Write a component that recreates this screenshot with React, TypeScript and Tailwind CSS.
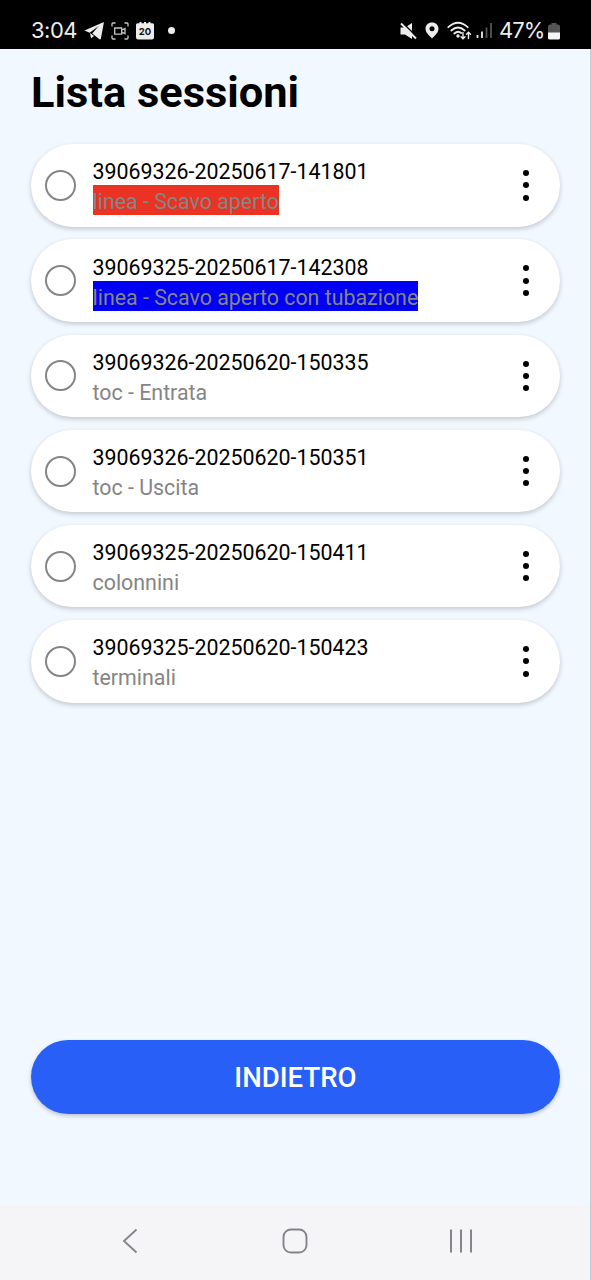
type Session = {
  id: string;
  label: string;
  labelClassName?: string;
};

const sessions: Session[] = [
  { id: '39069326-20250617-141801', label: 'linea - Scavo aperto', labelClassName: 'bg-[#ea3323]' },
  {
    id: '39069325-20250617-142308',
    label: 'linea - Scavo aperto con tubazione',
    labelClassName: 'bg-[#0000f5]'
  },
  { id: '39069326-20250620-150335', label: 'toc - Entrata' },
  { id: '39069326-20250620-150351', label: 'toc - Uscita' },
  { id: '39069325-20250620-150411', label: 'colonnini' },
  { id: '39069325-20250620-150423', label: 'terminali' }
];

function StatusBar() {
  return (
    <header className="flex h-[49px] shrink-0 items-center justify-between bg-black pt-[13px] pr-[31px] pb-[1px] pl-[31px] font-['Inter',sans-serif] text-[#ededed]">
      <div className="flex items-center">
        <span className="w-[53px] text-[22px] leading-[35px] tracking-[-0.5px]">3:04</span>
        {/* Telegram */}
        <svg width="20" height="18" viewBox="0 0 20 18" fill="currentColor">
          <path d="M19.3 0.2 0.5 8.6 5.7 10.7 14.7 4 8.2 11.4 15.5 17.2Q16.5 17.8 16.9 16.5L19.8 1Q20 0 19.3 0.2Z" />
          <path d="m5.9 10.9 1.2 5.3 3-2.3Z" />
        </svg>
        {/* Screen recorder */}
        <svg
          className="ml-[7px]"
          width="18"
          height="18"
          viewBox="0 0 18 18"
          fill="none"
          stroke="#c4c4c4"
          strokeWidth="1.3"
        >
          <path d="M1 4.5V2q0-1 1-1h2.5M13.5 1H16q1 0 1 1v2.5M17 13.5V16q0 1-1 1h-2.5M4.5 17H2q-1 0-1-1v-2.5" />
          <path d="M3.7 6h7v6.2h-7ZM10.7 8.2l3.3-1.7v5.2l-3.3-1.7" />
        </svg>
        {/* Calendar */}
        <svg className="ml-[7px]" width="18" height="18" viewBox="0 0 18 18">
          <path
            d="M1.5 1.2h2V0h2v1.2h2.5V0h2v1.2h2.5V0h2v1.2h2Q18 1.2 18 2.7V15.5Q18 17.5 16 17.5H2Q0 17.5 0 15.5V2.7Q0 1.2 1.5 1.2Z"
            fill="currentColor"
          />
          <text x="9" y="13" textAnchor="middle" fontSize="9.5" fontWeight="700" fill="#111">
            20
          </text>
        </svg>
        <span className="ml-[14px] size-[7px] rounded-full bg-[#ededed]" />
      </div>

      <div className="flex items-center">
        {/* Muted */}
        <svg width="17" height="18" viewBox="0 0 17 18">
          <path d="M0.5 5.5H5L12 1v16L5 12.5H0.5Z" fill="currentColor" />
          <path d="M1.8 0 17.5 15.5" stroke="#000" strokeWidth="1.6" />
          <path d="M1 1.5 16 16.5" stroke="currentColor" strokeWidth="2" />
        </svg>
        {/* Location */}
        <svg className="ml-[8px]" width="14" height="17" viewBox="0 0 14 17">
          <path
            d="M7 0.5C3.2 0.5 0.5 3.2 0.5 6.8 0.5 10.5 4 13.5 7 16.5 10 13.5 13.5 10.5 13.5 6.8 13.5 3.2 10.8 0.5 7 0.5ZM7 4.2A2.5 2.5 0 1 1 7 9.2 2.5 2.5 0 0 1 7 4.2Z"
            fill="currentColor"
            fillRule="evenodd"
          />
        </svg>
        {/* Wi-Fi */}
        <svg
          className="ml-[8px]"
          width="25"
          height="19"
          viewBox="0 0 25 19"
          fill="none"
          stroke="currentColor"
          strokeWidth="1.8"
          strokeLinecap="round"
        >
          <path d="M1.3 6.2Q11 -2.8 20.7 6.2M4.3 9.5Q11 3.5 17.7 9.5M7.3 12.5Q11 9.2 14.2 12" />
          <circle cx="11" cy="15" r="0.8" fill="currentColor" />
          <path d="M16 11.5v6M14 15.7l2 2 2-2M21.5 17.5v-6M19.5 13.3l2-2 2 2" strokeWidth="1.4" />
        </svg>
        {/* Signal */}
        <svg className="ml-[4px]" width="16" height="17" viewBox="0 0 16 17" strokeWidth="1.8">
          <path d="M1.5 16v-3M6 16V9.5" stroke="#ededed" />
          <path d="M10.5 16V5.5M15 16V1" stroke="#555" />
        </svg>
        <span className="ml-[7px] w-[49px] text-[22px] leading-[35px] tracking-[-0.9px]">47%</span>
        {/* Battery */}
        <svg className="mt-[1px]" width="12" height="17" viewBox="0 0 12 17">
          <path d="M3.5 0h5v1.5H10q2 0 2 2V10H0V3.5q0-2 2-2h1.5Z" fill="#555" />
          <path d="M0 9.5h12V15q0 1.5-1.5 1.5h-9Q0 16.5 0 15Z" fill="#f5f5f5" />
        </svg>
      </div>
    </header>
  );
}

function SessionCard({ session }: { session: Session }) {
  return (
    <li className="flex h-[82.3px] items-center rounded-full bg-white pr-[30px] pl-[14px] shadow-[0_2px_5px_rgba(0,0,0,0.2)]">
      <span className="size-[31px] shrink-0 rounded-full border-[2.5px] border-[#858585]" />
      <div className="ml-[16.5px] flex flex-1 flex-col items-start text-[21.38px] leading-[27px]">
        <span className="pt-[3px] text-black">{session.id}</span>
        <span className={`pt-[3px] text-[#858585] ${session.labelClassName ?? ''}`}>{session.label}</span>
      </div>
      <div className="flex w-[8px] flex-col items-center gap-[6.2px]">
        <span className="size-[6px] rounded-full bg-black" />
        <span className="size-[6px] rounded-full bg-black" />
        <span className="size-[6px] rounded-full bg-black" />
      </div>
    </li>
  );
}

function NavigationBar() {
  return (
    <nav className="flex h-[75px] shrink-0 items-center justify-between bg-[#f5f5f8] pr-[117px] pb-[4px] pl-[122px] text-[#858589]">
      <svg width="16" height="26" viewBox="0 0 16 26" fill="none" stroke="currentColor" strokeWidth="1.9">
        <path d="M14.5 1.5 2 13l12.5 11.5" />
      </svg>
      <svg
        className="ml-[3px]"
        width="26"
        height="26"
        viewBox="0 0 26 26"
        fill="none"
        stroke="currentColor"
        strokeWidth="1.9"
      >
        <rect x="1.5" y="1.5" width="23" height="23" rx="7.5" />
      </svg>
      <svg width="24" height="26" viewBox="0 0 24 26" stroke="currentColor" strokeWidth="2">
        <path d="M2 1.5v23M12 1.5v23M22 1.5v23" />
      </svg>
    </nav>
  );
}

export default function App() {
  return (
    <div className="flex h-[1280px] w-[591px] flex-col overflow-hidden bg-[#f1f8ff] font-['Roboto',sans-serif]">
      <StatusBar />
      <div className="flex flex-1 flex-col border-r border-[#c5ccd3]">
        <main className="flex flex-1 flex-col pr-[30px] pl-[31px]">
          <h1 className="mt-[18px] text-[43.4px] leading-[52px] font-bold text-black">Lista sessioni</h1>
          <ul className="mt-[25.3px] flex flex-col gap-[12.9px]">
            {sessions.map((session) => (
              <SessionCard key={session.id} session={session} />
            ))}
          </ul>
          <button className="mt-auto mb-[91.5px] h-[73.5px] shrink-0 rounded-full bg-[#2860f7] pt-[1.5px] text-[27.6px] font-medium text-white shadow-[0_2px_4px_rgba(0,0,0,0.22)]">
            INDIETRO
          </button>
        </main>
        <NavigationBar />
      </div>
    </div>
  );
}
